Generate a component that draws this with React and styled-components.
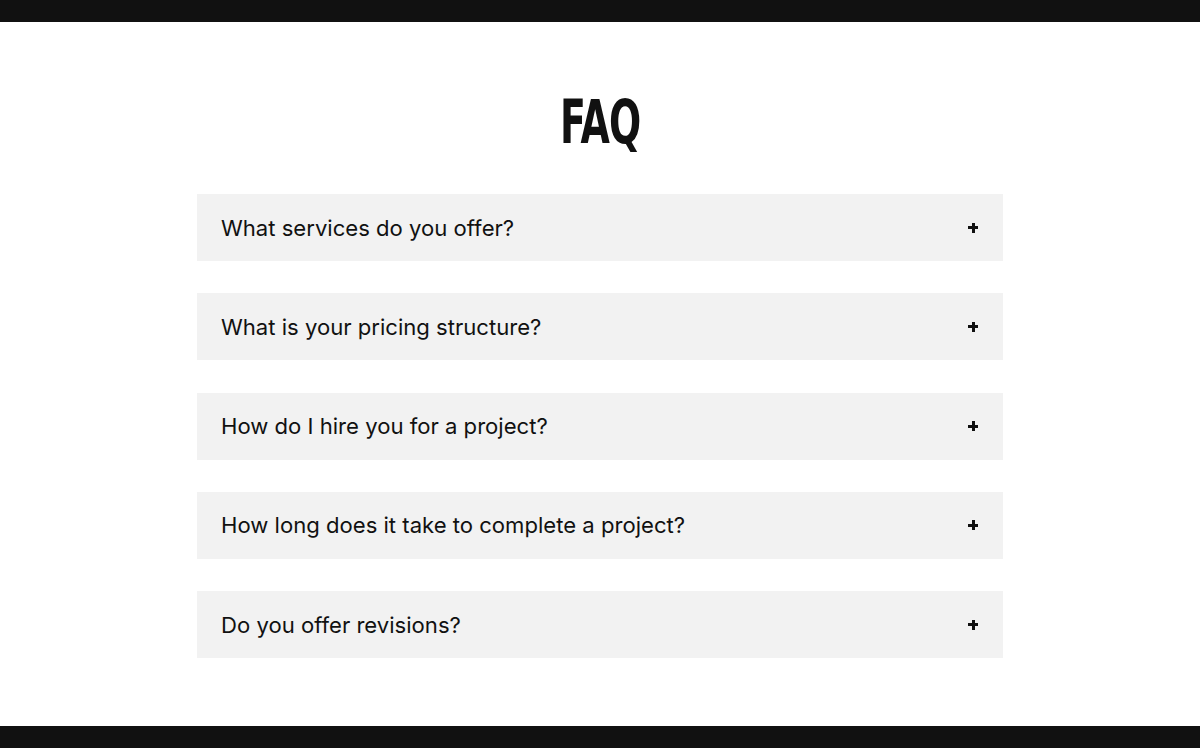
import React from 'react'
import styled, { createGlobalStyle } from 'styled-components'

const GlobalStyle = createGlobalStyle`
    html, body {
        margin: 0;
        padding: 0;
        background: #fff;
        font-family: Inter, "Noto Sans", sans-serif;
        color: #111;
    }
`

const Page = styled.div`
    display: flex;
    flex-direction: column;
    min-height: 748px;
`

const Bar = styled.div`
    height: ${({ $h }) => $h}px;
    background-color: #111;
    flex-shrink: 0;
`

const Section = styled.section`
    flex: 1;
    display: flex;
    flex-direction: column;
    align-items: center;
    padding-top: 66px;
`

const Title = styled.h2`
    margin: 0 0 38px;
    font-family: "Liberation Sans Narrow", "DejaVu Sans Condensed", sans-serif;
    font-size: 61px;
    line-height: 68px;
    font-weight: 700;
    letter-spacing: -1px;
    color: #111;
    transform: scaleX(0.69);
`

const List = styled.div`
    display: flex;
    flex-direction: column;
    gap: 32.25px;
    width: 806px;
`

const Item = styled.button`
    display: flex;
    align-items: center;
    justify-content: space-between;
    height: 67px;
    padding: 0 24px;
    background-color: #f2f2f2;
    border: none;
    font-family: Inter, "Noto Sans", sans-serif;
    font-size: 22.1px;
    font-weight: 400;
    color: #111;
    text-align: left;
    cursor: pointer;
`

const Plus = styled.span`
    width: 10px;
    height: 10px;
    margin-right: 1px;
    position: relative;

    &::before, &::after {
        content: '';
        position: absolute;
        background: #111;
    }
    &::before {
        left: 0;
        top: 3.5px;
        width: 10px;
        height: 3px;
    }
    &::after {
        left: 3.5px;
        top: 0;
        width: 3px;
        height: 10px;
    }
`

const questions = [
    'What services do you offer?',
    'What is your pricing structure?',
    'How do I hire you for a project?',
    'How long does it take to complete a project?',
    'Do you offer revisions?',
]

const App = () => {
    return (
        <Page>
            <GlobalStyle />
            <Bar $h={22} />
            <Section>
                <Title>FAQ</Title>
                <List>
                    {questions.map((q) => (
                        <Item key={q}>
                            <span>{q}</span>
                            <Plus />
                        </Item>
                    ))}
                </List>
            </Section>
            <Bar $h={22} />
        </Page>
    )
}

export default App
